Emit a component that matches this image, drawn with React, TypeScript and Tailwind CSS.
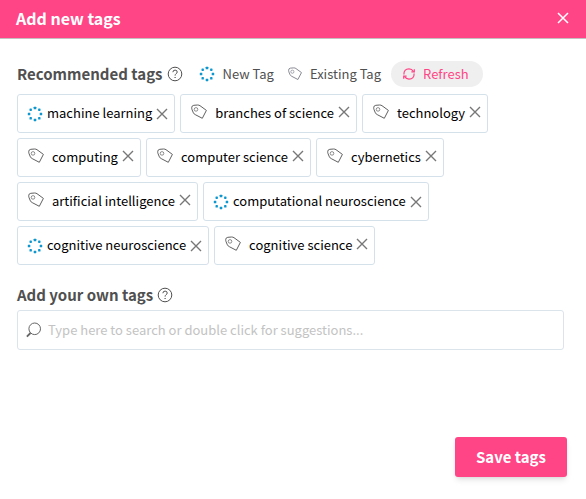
import React, { useState } from 'react'

type Tag = { name: string; isNew?: boolean }

const recommended: Tag[] = [
    { name: 'machine learning', isNew: true },
    { name: 'branches of science' },
    { name: 'technology' },
    { name: 'computing' },
    { name: 'computer science' },
    { name: 'cybernetics' },
    { name: 'artificial intelligence' },
    { name: 'computational neuroscience', isNew: true },
    { name: 'cognitive neuroscience', isNew: true },
    { name: 'cognitive science' }
]

function NewTagIcon() {
    return (
        <svg className="h-4 w-4 shrink-0" viewBox="0 0 16 16" fill="#0d97cf" aria-hidden="true">
            <rect x="6.7" y="0.8" width="2.6" height="2.5" rx="0.4" />
            <rect x="11.1" y="2.5" width="2.4" height="2.4" rx="0.6" />
            <rect x="12.7" y="6.7" width="2.5" height="2.6" rx="0.4" />
            <rect x="11.1" y="11.1" width="2.4" height="2.4" rx="0.6" />
            <rect x="6.7" y="12.7" width="2.6" height="2.5" rx="0.4" />
            <rect x="2.5" y="11.1" width="2.4" height="2.4" rx="0.6" />
            <rect x="0.8" y="6.7" width="2.5" height="2.6" rx="0.4" />
            <rect x="2.5" y="2.5" width="2.4" height="2.4" rx="0.6" />
        </svg>
    )
}

function TagIcon({ className }: { className: string }) {
    return (
        <svg className={className} viewBox="0 0 16 16" fill="none" stroke="currentColor" strokeLinejoin="round" aria-hidden="true">
            <path d="M0.7 3.8 Q0.6 1.6 2.8 1.3 L6.6 1 Q8 1 9 1.7 L15.4 6.4 L11.3 14.3 L4.2 10.6 Q3 10 2.4 8.9 L1.1 5.8 Q0.7 4.8 0.7 3.8 Z" />
            <circle cx="5" cy="5.4" r="1.8" strokeWidth="0.7" />
        </svg>
    )
}

function CloseIcon({ className }: { className: string }) {
    return (
        <svg className={className} viewBox="0 0 12 12" fill="none" stroke="currentColor" aria-hidden="true">
            <path d="M1 1 L11 11 M11 1 L1 11" />
        </svg>
    )
}

function HelpIcon() {
    return (
        <svg className="h-4 w-4" viewBox="0 0 16 16" fill="none" stroke="#505050" aria-hidden="true">
            <circle cx="8" cy="8" r="6.8" />
            <path d="M5.9 6.2 Q5.9 4.1 8.1 4.1 Q10.2 4.1 10.2 6 Q10.2 7 9.1 7.7 Q8.1 8.4 8.1 9.6" />
            <path d="M8.1 10.9 V12.1" strokeWidth="1.2" />
        </svg>
    )
}

function RefreshIcon() {
    return (
        <svg className="h-3 w-3" viewBox="0 0 12 12" fill="none" stroke="currentColor" strokeWidth="1.2" aria-hidden="true">
            <path d="M0.9 6.6 Q0.7 1 6 0.9 Q8.8 0.9 10.6 3.6 M11.1 5.4 Q11.3 11 6 11.1 Q3.2 11.1 1.4 8.4" />
            <path d="M11.3 1.2 V3.9 H8.4 M0.7 10.8 V8.1 H3.6" />
        </svg>
    )
}

function SearchIcon() {
    return (
        <svg className="h-4 w-4 shrink-0" viewBox="0 0 16 16" fill="none" stroke="#666" aria-hidden="true">
            <circle cx="8.7" cy="6.8" r="5.8" />
            <path d="M4.5 11 L0.9 14.6" strokeWidth="1.8" />
        </svg>
    )
}

export default function App() {
    const [tags, setTags] = useState(recommended)
    const [query, setQuery] = useState('')

    const removeTag = (name: string) => {
        setTags(tags.filter(tag => tag.name !== name))
    }

    return (
        <div className="flex min-h-screen flex-col bg-white font-['Noto_Sans_CJK_SC',sans-serif] text-[#505050]">
            {/* Header */}
            <header className="flex items-center justify-between border-b border-[#c4bfc1] bg-[#ff4586] px-4 pb-[5px] pt-[3px] text-white">
                <h1 className="text-base font-bold leading-[30px]">Add new tags</h1>
                <button type="button" aria-label="Close" className="p-px">
                    <CloseIcon className="h-3 w-3 stroke-[1.5]" />
                </button>
            </header>

            <main className="flex grow flex-col pb-[22px] pl-[17px] pr-[19px] pt-[22px]">
                {/* Recommended tags */}
                <div className="mb-[7px] flex h-[26px] items-center text-[13px]">
                    <h2 className="mr-1 text-[15px] font-bold">Recommended tags</h2>
                    <HelpIcon />
                    <span className="ml-4 flex items-center gap-2"><NewTagIcon />New Tag</span>
                    <span className="ml-3.5 flex items-center gap-2"><TagIcon className="h-3.5 w-3.5 text-[#777785]" />Existing Tag</span>
                    <button
                        type="button"
                        onClick={() => setTags(recommended)}
                        className="ml-2.5 flex h-[26px] items-center gap-2 rounded-full bg-[#efefef] pl-3 pr-3.5 text-[#ff4586]"
                    >
                        <RefreshIcon />
                        Refresh
                    </button>
                </div>

                <ul className="flex flex-wrap gap-[5px] text-[13px] text-black">
                    {tags.map((tag) => (
                        <li key={tag.name} className="flex h-[39px] items-center rounded-[3px] border border-[#d5e1ea] pl-[9px] pr-1.5">
                            {tag.isNew ? <NewTagIcon /> : <TagIcon className="mb-1 ml-px mr-1 h-4 w-4 shrink-0 text-[#606060]" />}
                            <span className="ml-1 pb-0.5">{tag.name}</span>
                            <button
                                type="button"
                                onClick={() => removeTag(tag.name)}
                                aria-label={`Remove ${tag.name}`}
                                className={`ml-1 text-[#777] ${tag.isNew ? '' : 'mb-1'}`}
                            >
                                <CloseIcon className="h-3 w-3 stroke-[1.4]" />
                            </button>
                        </li>
                    ))}
                </ul>

                {/* Own tags */}
                <div className="mb-1 mt-[18px] flex items-center gap-1">
                    <label htmlFor="own-tags" className="text-[15px] font-bold leading-[23px]">Add your own tags</label>
                    <HelpIcon />
                </div>
                <div className="mr-[3px] flex h-10 items-center gap-1.5 rounded-[3px] border border-[#dbe3eb] px-2">
                    <SearchIcon />
                    <input
                        id="own-tags"
                        type="text"
                        value={query}
                        onChange={(e) => setQuery(e.target.value)}
                        placeholder="Type here to search or double click for suggestions..."
                        className="min-w-0 grow text-[13px] outline-none placeholder:text-[#c3c3c3]"
                    />
                </div>

                <div className="mt-auto flex justify-end pt-6">
                    <button type="button" className="h-10 rounded-[3px] bg-[#ff4586] px-[21px] text-[15px] font-bold text-white shadow-md">
                        Save tags
                    </button>
                </div>
            </main>
        </div>
    )
}
